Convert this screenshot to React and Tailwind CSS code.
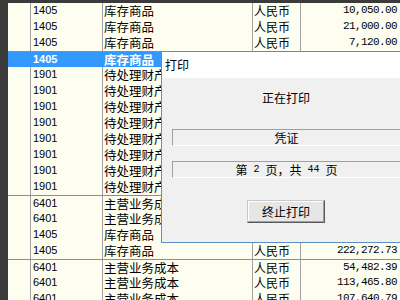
import React from "react";

const cjk = { fontFamily: '"Noto Sans CJK SC", "Noto Sans", sans-serif' };

const rows = [
  { code: "1405", name: "库存商品", amt: "10,050.00" },
  { code: "1405", name: "库存商品", amt: "21,000.00" },
  { code: "1405", name: "库存商品", amt: "7,120.00" },
  { code: "1405", name: "库存商品", amt: "3,000.00", sel: true, sep: true },
  { code: "1901", name: "待处理财产损溢", amt: "1,200.00" },
  { code: "1901", name: "待处理财产损溢", amt: "1,200.00" },
  { code: "1901", name: "待处理财产损溢", amt: "1,200.00" },
  { code: "1901", name: "待处理财产损溢", amt: "1,200.00" },
  { code: "1901", name: "待处理财产损溢", amt: "1,200.00" },
  { code: "1901", name: "待处理财产损溢", amt: "1,200.00" },
  { code: "1901", name: "待处理财产损溢", amt: "1,200.00" },
  { code: "1901", name: "待处理财产损溢", amt: "1,200.00" },
  { code: "6401", name: "主营业务成本", amt: "54,482.39", sep: true },
  { code: "6401", name: "主营业务成本", amt: "113,465.80" },
  { code: "1405", name: "库存商品", amt: "54,482.39" },
  { code: "1405", name: "库存商品", amt: "222,272.73" },
  { code: "6401", name: "主营业务成本", amt: "54,482.39", sep: true },
  { code: "6401", name: "主营业务成本", amt: "113,465.80" },
  { code: "6401", name: "主营业务成本", amt: "107,640.79" },
];

function Row({ r }) {
  const sel = r.sel;
  return (
    <div className="flex h-4">
      <div className="w-[8px] shrink-0 bg-[#3b3b3b]" />
      <div
        className={
          r.sep
            ? "flex flex-1 border-t border-[#8c8c8c]"
            : "flex flex-1"
        }
      >
        <div
          className={
            sel
              ? "w-[23px] shrink-0 border-r border-[#3399ff] bg-[#3399ff]"
              : "w-[23px] shrink-0 border-r border-[#a0a0a0]"
          }
        />
        <div
          className={
            sel
              ? "w-[72px] shrink-0 border-r border-[#3399ff] bg-[#3399ff] pl-[2px] text-[11px] leading-[15px] font-bold text-white"
              : "w-[72px] shrink-0 border-r border-[#a0a0a0] pl-[2px] text-[11px] leading-[15px] text-black"
          }
          style={{ fontFamily: '"Liberation Sans", Arial, sans-serif' }}
        >
          {r.code}
        </div>
        <div
          className={
            sel
              ? "w-[150px] shrink-0 whitespace-nowrap border-r border-[#3399ff] bg-[#3399ff] pl-[1px] text-[12.5px] leading-[15px] font-bold text-white"
              : "w-[150px] shrink-0 whitespace-nowrap border-r border-[#a0a0a0] pl-[1px] text-[12.5px] leading-[15px] text-black"
          }
          style={cjk}
        >
          {r.name}
        </div>
        <div
          className={
            sel
              ? "w-[48px] shrink-0 border-r border-[#3399ff] bg-[#3399ff] pl-[1px] text-[12px] leading-[15px] text-white"
              : "w-[48px] shrink-0 border-r border-[#a0a0a0] pl-[1px] text-[12px] leading-[15px] text-black"
          }
          style={cjk}
        >
          人民币
        </div>
        <div
          className={
            sel
              ? "flex-1 bg-[#3399ff] pr-[3px] text-right text-[11px] leading-[15px] tracking-[-0.6px] text-white"
              : "flex-1 pr-[3px] text-right text-[11px] leading-[15px] tracking-[-0.6px] text-black"
          }
          style={{ fontFamily: '"Liberation Mono", monospace' }}
        >
          {r.amt}
        </div>
      </div>
    </div>
  );
}

const mono = { fontFamily: '"Liberation Mono", monospace' };

export default function App() {
  return (
    <div className="relative h-[300px] w-[400px] overflow-hidden bg-[#fefef0]">
      <div className="h-[3px] bg-[#3b3b3b]" />
      {rows.map((r, i) => (
        <Row key={i} r={r} />
      ))}

      {/* Print dialog */}
      <div
        className="absolute left-[161px] top-[51px] flex h-[192px] w-[250px] flex-col border border-[#5b8fc4] bg-[#f0f0f0]"
        style={cjk}
      >
        <div className="flex h-[26px] items-center bg-white pl-[3px] text-[12px] text-black">
          打印
        </div>
        <div className="flex flex-1 flex-col px-[10px]">
          <div className="mt-[12px] text-center text-[12px] leading-[16px] text-black">
            正在打印
          </div>
          <div className="mt-[23px] flex h-[17px] items-center justify-center border-t border-l border-b border-t-[#a0a0a0] border-l-[#a0a0a0] border-b-white text-[12px] text-black">
            凭证
          </div>
          <div className="mt-[15px] flex h-[17px] items-center justify-center whitespace-pre border-t border-l border-b border-t-[#a0a0a0] border-l-[#a0a0a0] border-b-white text-[12px] leading-[15px] text-black">
            <span>第</span>
            <span className="text-[10px] leading-[15px]" style={mono}> 2 </span>
            <span>页，</span>
            <span>共</span>
            <span className="text-[10px] leading-[15px]" style={mono}> 44 </span>
            <span>页</span>
          </div>
          <div className="mt-[22px] flex justify-center">
            <div className="flex h-[23px] w-[78px] items-center justify-center border border-t-[#c8c8c8] border-l-[#c8c8c8] border-r-[#5a5a5a] border-b-[#5a5a5a] bg-[#e6e6e6] text-[12px] text-black shadow-[inset_-1px_-1px_0_#a0a0a0,inset_1px_1px_0_#ffffff]">
              终止打印
            </div>
          </div>
        </div>
      </div>
    </div>
  );
}
